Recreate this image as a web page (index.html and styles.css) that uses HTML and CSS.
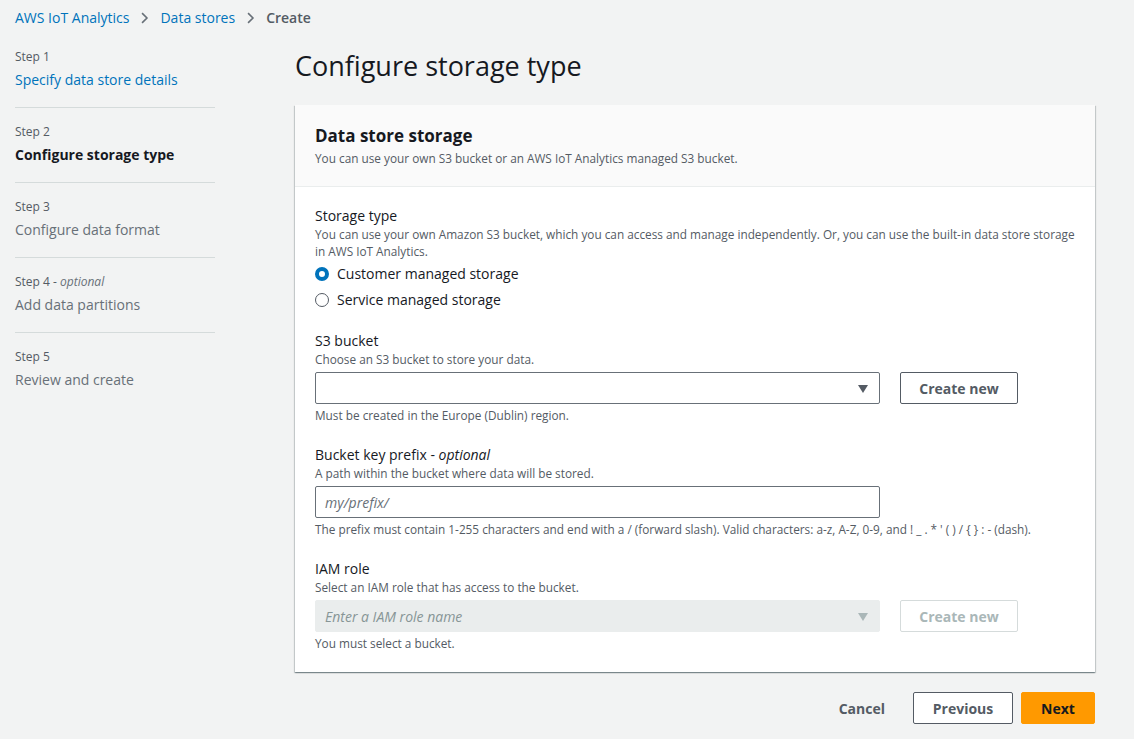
FILE: index.html
```html
<!DOCTYPE html>
<html>
<head>
<meta charset="utf-8">
<link rel="stylesheet" href="styles.css">
</head>
<body>
<nav class="crumbs">
  <a class="crumb-link">AWS IoT Analytics</a>
  <svg class="chev" viewBox="0 0 16 16" width="16" height="16"><path d="M5 2l6 6-6 6" fill="none" stroke="#687078" stroke-width="2"/></svg>
  <a class="crumb-link">Data stores</a>
  <svg class="chev" viewBox="0 0 16 16" width="16" height="16"><path d="M5 2l6 6-6 6" fill="none" stroke="#687078" stroke-width="2"/></svg>
  <span class="crumb-current">Create</span>
</nav>
<div class="layout">
  <aside class="steps">
    <div class="step first">
      <div class="step-num">Step 1</div>
      <div class="step-title link">Specify data store details</div>
    </div>
    <div class="step">
      <div class="step-num">Step 2</div>
      <div class="step-title active">Configure storage type</div>
    </div>
    <div class="step">
      <div class="step-num">Step 3</div>
      <div class="step-title">Configure data format</div>
    </div>
    <div class="step">
      <div class="step-num">Step 4 - <i>optional</i></div>
      <div class="step-title">Add data partitions</div>
    </div>
    <div class="step last">
      <div class="step-num">Step 5</div>
      <div class="step-title">Review and create</div>
    </div>
  </aside>
  <main class="main">
    <h1 class="page-title">Configure storage type</h1>
    <section class="panel">
      <header class="panel-head">
        <h2 class="panel-title">Data store storage</h2>
        <p class="panel-desc">You can use your own S3 bucket or an AWS IoT Analytics managed S3 bucket.</p>
      </header>
      <div class="panel-body">
        <div class="field">
          <div class="label">Storage type</div>
          <div class="desc">You can use your own Amazon S3 bucket, which you can access and manage independently. Or, you can use the built-in data store storage in AWS IoT Analytics.</div>
          <div class="radios">
            <label class="radio"><span class="dot on"></span>Customer managed storage</label>
            <label class="radio"><span class="dot"></span>Service managed storage</label>
          </div>
        </div>
        <div class="field">
          <div class="label">S3 bucket</div>
          <div class="desc">Choose an S3 bucket to store your data.</div>
          <div class="control-row">
            <div class="select"><span class="caret"></span></div>
            <button class="btn">Create new</button>
          </div>
          <div class="hint">Must be created in the Europe (Dublin) region.</div>
        </div>
        <div class="field">
          <div class="label">Bucket key prefix - <i>optional</i></div>
          <div class="desc">A path within the bucket where data will be stored.</div>
          <div class="control-row">
            <div class="input"><span class="placeholder">my/prefix/</span></div>
          </div>
          <div class="hint">The prefix must contain 1-255 characters and end with a / (forward slash). Valid characters: a-z, A-Z, 0-9, and ! _ . * ' ( ) / { } : - (dash).</div>
        </div>
        <div class="field last">
          <div class="label">IAM role</div>
          <div class="desc">Select an IAM role that has access to the bucket.</div>
          <div class="control-row">
            <div class="select disabled"><span class="placeholder">Enter a IAM role name</span><span class="caret"></span></div>
            <button class="btn disabled">Create new</button>
          </div>
          <div class="hint">You must select a bucket.</div>
        </div>
      </div>
    </section>
    <div class="actions">
      <button class="btn-link">Cancel</button>
      <button class="btn prev">Previous</button>
      <button class="btn primary">Next</button>
    </div>
  </main>
</div>
</body>
</html>
```
FILE: styles.css
```css
* { box-sizing: border-box; }
html, body { margin: 0; padding: 0; }
body {
  background: #f2f3f3;
  font-family: "Open Sans", "Noto Sans", Arial, sans-serif;
  color: #16191f;
  font-size: 14px;
  width: 1134px;
  height: 739px;
  overflow: hidden;
}
.crumbs {
  display: flex;
  align-items: center;
  padding: 7px 0 0 15px;
  height: 28px;
  font-size: 14px;
  gap: 9px;
}
.crumb-link { color: #0073bb; }
.crumb-current { color: #545b64; font-weight: 600; }
.chev { width: 13px; height: 14px; }
.layout {
  display: flex;
  padding-top: 20px;
}
.steps {
  width: 200px;
  margin-left: 15px;
  flex: none;
}
.step {
  border-bottom: 1px solid #d5dbdb;
  height: 75px;
  padding-top: 15px;
}
.step.first { padding-top: 0; height: 60px; }
.step.last { border-bottom: none; }
.step-num { font-size: 12px; color: #545b64; line-height: 18px; }
.step-num i { color: #687078; }
.step-title { font-size: 14px; line-height: 20px; margin-top: 4px; color: #687078; }
.step-title.link { color: #0073bb; }
.step-title.active { color: #16191f; font-weight: 700; }
.main {
  margin-left: 80px;
  width: 800px;
}
.page-title {
  font-size: 27px;
  font-weight: 400;
  margin: 0;
  line-height: 36px;
  color: #16191f;
  height: 57px;
  padding-top: 0;
}
.panel {
  background: #fff;
  box-shadow: 0 1px 1px 0 rgba(0,28,36,0.3), 1px 1px 1px 0 rgba(0,28,36,0.15), -1px 1px 1px 0 rgba(0,28,36,0.15);
}
.panel-head {
  background: #fafafa;
  border-bottom: 1px solid #eaeded;
  padding: 20px 20px 18px;
  height: 82px;
}
.panel-title {
  margin: 0;
  font-size: 17px;
  font-weight: 700;
  line-height: 22px;
}
.panel-desc {
  margin: 3px 0 0;
  font-size: 11.8px;
  line-height: 16px;
  color: #545b64;
}
.panel-body { padding: 19px 20px 20px; }
.field { margin-bottom: 21px; }
.field.last { margin-bottom: 0; }
.label { font-size: 14px; line-height: 20px; }
.desc, .hint {
  font-size: 11.8px;
  line-height: 17px;
  color: #545b64;
}
.desc { margin-bottom: 4px; }
.hint { margin-top: 3px; }
.radios { display: flex; flex-direction: column; gap: 6px; }
.radio {
  display: flex;
  align-items: center;
  gap: 8px;
  font-size: 14px;
  line-height: 20px;
}
.dot {
  width: 14px; height: 14px;
  border-radius: 50%;
  border: 1.5px solid #545b64;
  display: inline-block;
}
.dot.on {
  border: 4px solid #0073bb;
  background: #fff;
}
.control-row {
  display: flex;
  gap: 20px;
  align-items: center;
}
.select, .input {
  width: 565px;
  height: 32px;
  border: 1px solid #687078;
  border-radius: 2px;
  display: flex;
  align-items: center;
  padding: 0 10px 0 9px;
  position: relative;
}
.select.disabled { background: #eaeded; border-color: #eaeded; }
.placeholder { font-style: italic; color: #687078; font-size: 14px; }
.select.disabled .placeholder { color: #879596; }
.caret {
  position: absolute;
  right: 11px;
  top: 12px;
  width: 0; height: 0;
  border-left: 5px solid transparent;
  border-right: 5px solid transparent;
  border-top: 8px solid #545b64;
}
.select.disabled .caret { border-top-color: #aab7b8; }
.btn {
  font-family: inherit;
  height: 32px;
  width: 118px;
  border: 1px solid #545b64;
  border-radius: 2px;
  background: #fff;
  color: #545b64;
  font-weight: 700;
  font-size: 14px;
  padding: 0;
}
.btn.disabled { border-color: #d5dbdb; color: #aab7b8; }
.actions {
  display: flex;
  justify-content: flex-end;
  align-items: center;
  margin-top: 20px;
  gap: 8px;
}
.btn-link {
  font-family: inherit;
  background: none;
  border: none;
  color: #545b64;
  font-weight: 700;
  font-size: 14px;
  padding: 0 20px;
  height: 32px;
}
.btn.prev { width: 100px; }
.btn.primary {
  width: 74px;
  background: #ff9900;
  border-color: #ff9900;
  color: #16191f;
}
```
